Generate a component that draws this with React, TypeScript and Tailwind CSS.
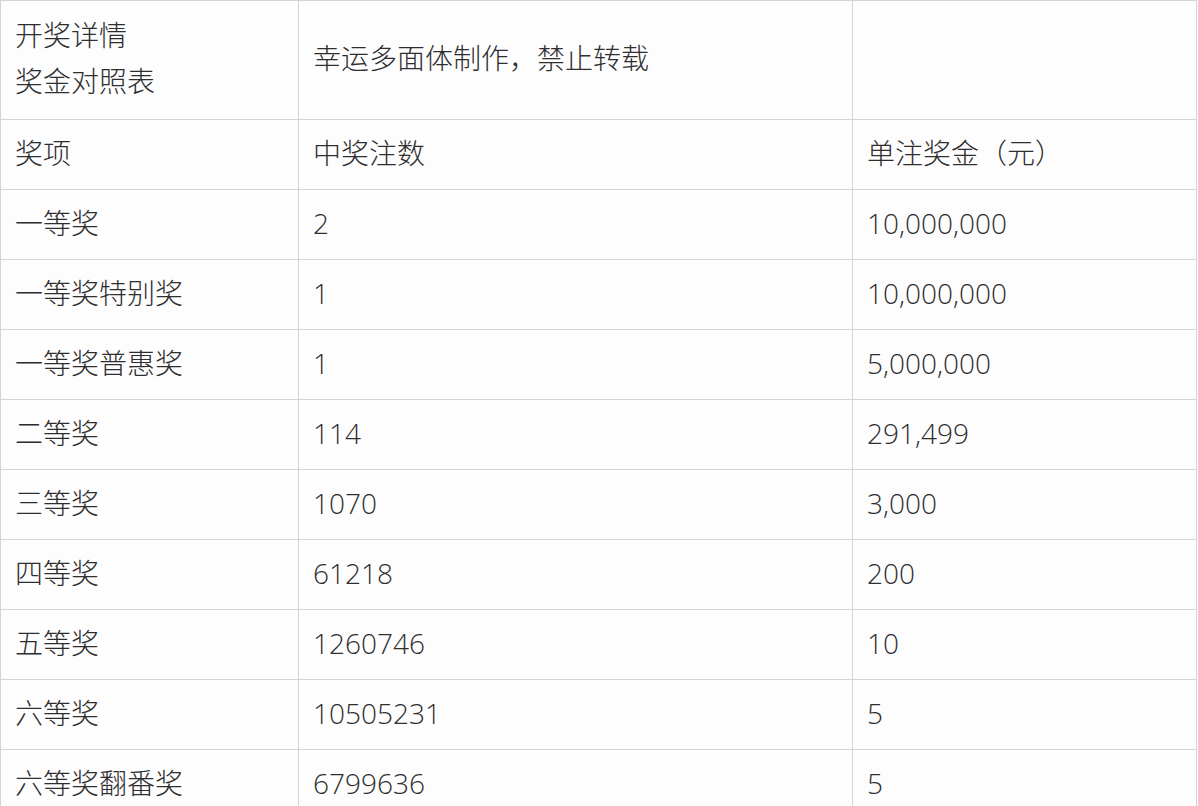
const rows: [string, string, string][] = [
  ['一等奖', '2', '10,000,000'],
  ['一等奖特别奖', '1', '10,000,000'],
  ['一等奖普惠奖', '1', '5,000,000'],
  ['二等奖', '114', '291,499'],
  ['三等奖', '1070', '3,000'],
  ['四等奖', '61218', '200'],
  ['五等奖', '1260746', '10'],
  ['六等奖', '10505231', '5'],
  ['六等奖翻番奖', '6799636', '5'],
]

const cell = 'border border-[#d4d4d4] pl-[14px] pb-[4px] align-middle font-light text-left'

export default function App() {
  return (
    <div
      className="w-[1198px] h-[806px] overflow-hidden bg-white text-[28px] text-[#2e2e2e]"
      style={{ fontFamily: '"Open Sans", "Noto Sans CJK SC", "Noto Sans", sans-serif' }}
    >
      <table className="w-[1196px] border-collapse table-fixed bg-[#fdfdfe]">
        <colgroup>
          <col className="w-[298px]" />
          <col className="w-[554px]" />
          <col className="w-[344px]" />
        </colgroup>
        <tbody>
          <tr className="h-[119px]">
            <td className={`${cell} leading-[46px]`}>
              <div>开奖详情</div>
              <div>奖金对照表</div>
            </td>
            <td className={cell}>幸运多面体制作，禁止转载</td>
            <td className={cell}></td>
          </tr>
          <tr className="h-[70px]">
            <td className={cell}>奖项</td>
            <td className={cell}>中奖注数</td>
            <td className={cell}>单注奖金（元）</td>
          </tr>
          {rows.map(([name, count, amount]) => (
            <tr key={name} className="h-[70px]">
              <td className={cell}>{name}</td>
              <td className={cell}>{count}</td>
              <td className={cell}>{amount}</td>
            </tr>
          ))}
        </tbody>
      </table>
    </div>
  )
}
